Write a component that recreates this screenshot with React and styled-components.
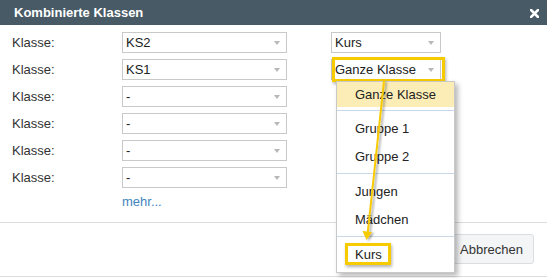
import React from "react";
import styled, { createGlobalStyle } from "styled-components";

const GlobalStyle = createGlobalStyle`
  html, body { margin: 0; padding: 0; background: #fff; }
  body { font-family: "Liberation Sans", Arial, sans-serif; }
`;

const YELLOW = "#f8cb00";

const Dialog = styled.div`
  position: relative;
  width: 547px;
  height: 278px;
  background: #fff;
  overflow: hidden;
`;

const Header = styled.div`
  height: 25px;
  background: #475a65;
  display: flex;
  align-items: center;
  justify-content: space-between;
  padding: 0 8px 0 14px;
  box-sizing: border-box;
`;

const Title = styled.div`
  color: #fff;
  font-weight: bold;
  font-size: 13px;
`;

const Close = styled.svg`
  width: 9px;
  height: 9px;
  display: block;
  margin-top: 1px;
`;

const Body = styled.div`
  padding: 7px 0 12px 12px;
  display: flex;
  flex-direction: column;
`;

const Rows = styled.div`
  display: flex;
  flex-direction: column;
  gap: 6px;
`;

const Row = styled.div`
  display: flex;
  align-items: center;
`;

const Label = styled.div`
  width: 110px;
  font-size: 13px;
  line-height: 21px;
  color: #333;
`;

const Select = styled.div`
  position: relative;
  box-sizing: border-box;
  width: ${(p) => p.$w}px;
  margin-left: ${(p) => p.$ml || 0}px;
  height: 21px;
  border: 1px solid #c9c9c9;
  background: #fff;
  display: flex;
  align-items: center;
  padding-left: 3px;
  font-size: 13px;
  color: #222;
  &::after {
    content: "";
    position: absolute;
    right: 6px;
    top: 8px;
    border-left: 3.5px solid transparent;
    border-right: 3.5px solid transparent;
    border-top: 4px solid #b8b8b8;
  }
`;

const SelectHighlight = styled.div`
  position: absolute;
  left: 0px;
  top: -3px;
  width: 113px;
  height: 25px;
  box-sizing: border-box;
  border: 3px solid ${YELLOW};
  box-shadow: 1px 2px 3px rgba(0, 0, 0, 0.3);
  pointer-events: none;
`;

const Menu = styled.div`
  position: absolute;
  top: 21px;
  left: 4px;
  width: 119px;
  box-sizing: border-box;
  border: 1px solid #c8c8c8;
  background: #fff;
  box-shadow: 3px 3px 5px rgba(0, 0, 0, 0.28);
  padding-bottom: 4px;
  z-index: 5;
`;

const MenuItem = styled.div`
  height: ${(p) => (p.$active ? 25 : 28)}px;
  display: flex;
  align-items: center;
  padding-left: 18px;
  font-size: 13px;
  color: #222;
  background: ${(p) => (p.$active ? "#fcedb7" : "transparent")};
`;

const Separator = styled.div`
  height: 1px;
  background: #c9d8e6;
  margin: 3px 0;
`;

const Callout = styled.span`
  display: inline-flex;
  align-items: center;
  height: 22px;
  box-sizing: border-box;
  margin-left: -10px;
  padding: 0 6px 0 7px;
  border: 3px solid ${YELLOW};
  box-shadow: 1px 2px 3px rgba(0, 0, 0, 0.3);
`;

const More = styled.a`
  margin: 6px 0 0 110px;
  font-size: 13px;
  line-height: 16px;
  color: #3f85bd;
  text-decoration: none;
  align-self: flex-start;
`;

const Footer = styled.div`
  border-top: 1px solid #dcdcdc;
  border-bottom: 1px solid #dcdcdc;
  padding: 11px 13px 12px;
  display: flex;
  justify-content: flex-end;
  gap: 8px;
`;

const Button = styled.button`
  height: 30px;
  padding: 0 10px;
  box-sizing: border-box;
  border: 1px solid #dcdde0;
  border-radius: 3px;
  background: #f4f5f7;
  font-family: "Liberation Sans", Arial, sans-serif;
  font-size: 13px;
  color: #333;
`;

const Overlay = styled.svg`
  position: absolute;
  left: 0;
  top: 0;
  width: 547px;
  height: 278px;
  pointer-events: none;
  z-index: 10;
`;

const rows = [
  { value: "KS2", right: "Kurs" },
  { value: "KS1", right: "Ganze Klasse", open: true },
  { value: "-" },
  { value: "-" },
  { value: "-" },
  { value: "-" },
];

export default function App() {
  return (
    <>
      <GlobalStyle />
      <Dialog>
        <Header>
          <Title>Kombinierte Klassen</Title>
          <Close viewBox="0 0 9 9">
            <path d="M1 1 L8 8 M8 1 L1 8" stroke="#fff" strokeWidth="2.6" strokeLinecap="square" />
          </Close>
        </Header>
        <Body>
          <Rows>
            {rows.map((r, i) => (
              <Row key={i}>
                <Label>Klasse:</Label>
                <Select $w={165}>{r.value}</Select>
                {r.right && (
                  <Select $w={110} $ml={44}>
                    {r.right}
                    {r.open && (
                      <>
                        <SelectHighlight />
                        <Menu>
                          <MenuItem $active>Ganze Klasse</MenuItem>
                          <Separator />
                          <MenuItem>Gruppe 1</MenuItem>
                          <MenuItem>Gruppe 2</MenuItem>
                          <Separator />
                          <MenuItem>Jungen</MenuItem>
                          <MenuItem>Mädchen</MenuItem>
                          <Separator />
                          <MenuItem>
                            <Callout>Kurs</Callout>
                          </MenuItem>
                        </Menu>
                      </>
                    )}
                  </Select>
                )}
              </Row>
            ))}
          </Rows>
          <More href="#">mehr...</More>
        </Body>
        <Footer>
          <Button>OK</Button>
          <Button>Abbrechen</Button>
        </Footer>
        <Overlay viewBox="0 0 547 278">
          <defs>
            <filter id="sh" x="-50%" y="-10%" width="200%" height="120%">
              <feDropShadow dx="2" dy="1" stdDeviation="1" floodColor="#000" floodOpacity="0.35" />
            </filter>
          </defs>
          <g filter="url(#sh)">
            <line x1="384" y1="81" x2="367.8" y2="232" stroke={YELLOW} strokeWidth="2" />
            <polygon points="362.5,231 372,232 366.6,240" fill={YELLOW} />
          </g>
        </Overlay>
      </Dialog>
    </>
  );
}
